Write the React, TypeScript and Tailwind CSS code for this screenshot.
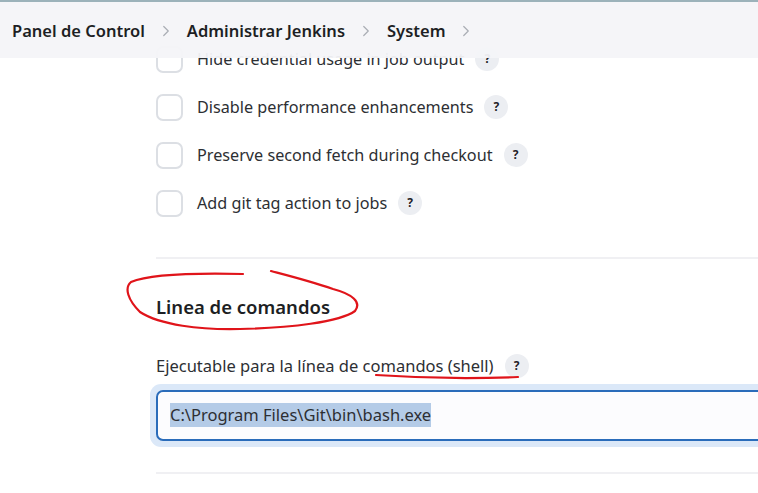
import { ChevronRight } from "lucide-react";

const font = { fontFamily: '"Noto Sans", "Open Sans", sans-serif' };

const crumbs = ["Panel de Control", "Administrar Jenkins", "System"];

const options = [
  "Hide credential usage in job output",
  "Disable performance enhancements",
  "Preserve second fetch during checkout",
  "Add git tag action to jobs",
];

function Help() {
  return (
    <span className="ml-[11px] inline-flex h-[24px] w-[24px] shrink-0 items-center justify-center rounded-full bg-[#eceef2] text-[12px] font-bold leading-none text-[#1f2126]">
      ?
    </span>
  );
}

export default function App() {
  return (
    <div className="relative h-[493px] w-[758px] overflow-hidden bg-white text-[#2d2f33]" style={font}>
      <header className="absolute inset-x-0 top-0 z-10 h-[58px] border-t-2 border-[#9cb2ba] bg-[#f4f4f8]/95">
        <nav className="flex h-full items-center pl-[12px] pt-[2px] text-[16.5px] font-semibold text-[#1d1f24]">
          {crumbs.map((c) => (
            <span key={c} className="flex items-center">
              <span>{c}</span>
              <ChevronRight className="mx-[12px] h-[18px] w-[18px] text-[#a9adb4]" strokeWidth={1.6} />
            </span>
          ))}
        </nav>
      </header>

      <main className="pl-[156px]">
        {/* Git options */}
        <div className="flex flex-col pt-[35px]">
          {options.map((o) => (
            <label key={o} className="flex h-[48px] items-center">
              <span className="h-[27px] w-[27px] shrink-0 rounded-[7px] border-2 border-[#dcdfe4] bg-white" />
              <span className="ml-[14px] text-[16.2px] text-[#2d2f33]">{o}</span>
              <Help />
            </label>
          ))}
        </div>

        <div className="mt-[30px] h-[2px] w-[700px] bg-[#f0f0f3]" />

        {/* Shell section */}
        <h2 className="mt-[36px] text-[18.5px] font-semibold leading-[24px] text-[#1d1f24]">Linea de comandos</h2>

        <div className="mt-[35px] flex items-center">
          <span className="text-[16.5px] text-[#2d2f33]">Ejecutable para la línea de comandos (shell)</span>
          <Help />
        </div>

        <div className="-ml-[6px] mt-[5px] w-[700px] rounded-[11px] bg-[#dbe8f8] p-[6px]">
          <div className="flex h-[51px] items-center rounded-[7px] border-2 border-[#2a6cba] bg-[#fcfcfe] pl-[12px]">
            <span className="bg-[#b4cbe7] text-[16.5px] leading-[24px] text-[#2d2f33]">C:\Program Files\Git\bin\bash.exe</span>
          </div>
        </div>

        <div className="mt-[25px] h-[2px] w-[700px] bg-[#f0f0f3]" />
      </main>

      {/* Red hand-drawn annotations */}
      <svg className="pointer-events-none absolute inset-0 z-20" width="758" height="493" fill="none">
        <path
          d="M243 274 C200 273 150 274 131 282 C124 288 128 300 140 312 C160 325 200 330 240 329 C290 328 340 322 355 311 C362 302 352 294 333 289 C310 281 290 276 271 271"
          stroke="#e0141a"
          strokeWidth="2.2"
          strokeLinecap="round"
        />
        <path d="M376 375 C420 378 470 379 518 377" stroke="#e0141a" strokeWidth="2.2" strokeLinecap="round" />
      </svg>
    </div>
  );
}
